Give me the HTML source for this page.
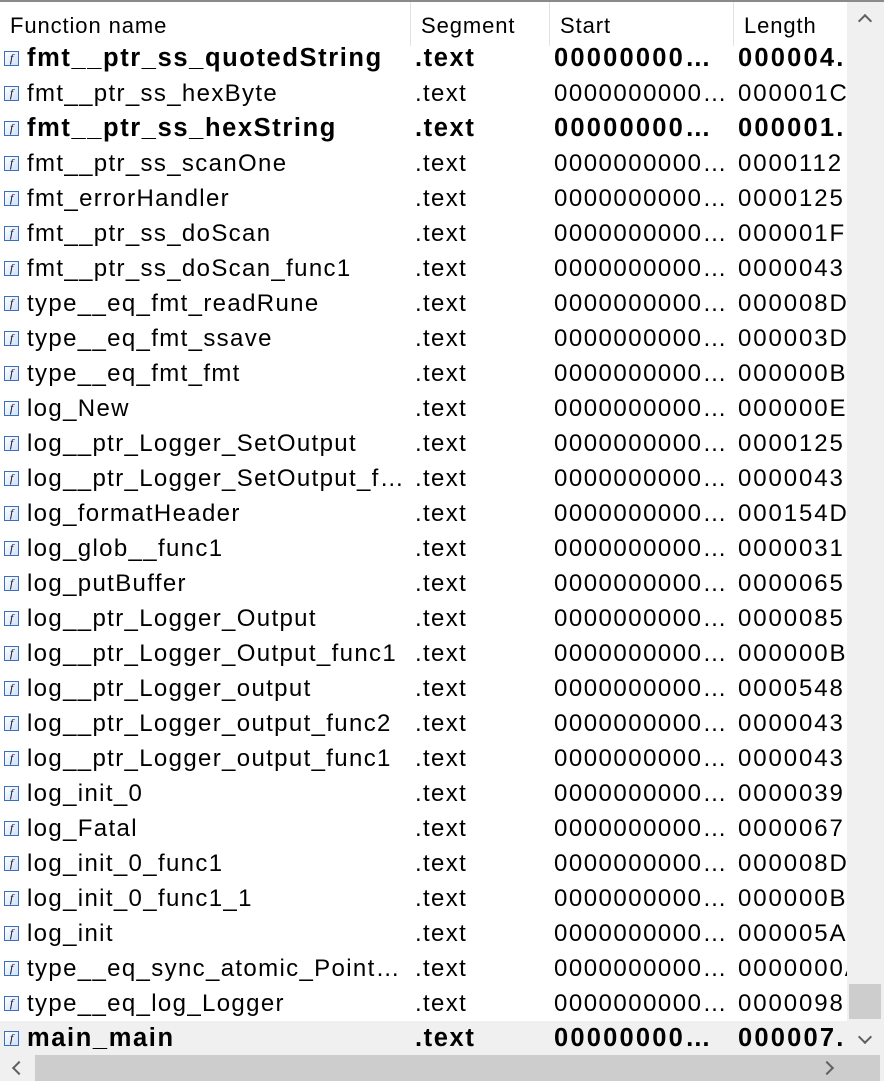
<!DOCTYPE html>
<html><head><meta charset="utf-8"><style>
*{margin:0;padding:0;box-sizing:border-box}
body{width:884px;height:1081px;overflow:hidden;background:#fff;font-family:"Liberation Sans",sans-serif;position:relative}
.top{position:absolute;left:0;top:0;width:884px;height:2px;background:#8a8a8a}
.hdr{position:absolute;top:2px;left:0;width:847px;height:44px;background:#fff}
.hdr div{position:absolute;top:0;height:44px;line-height:48px;font-size:22px;letter-spacing:0.9px;color:#000;padding-left:10px;border-right:1px solid #e3e3e3}
.list{position:absolute;top:46px;left:0;width:847px;height:1009px;overflow:hidden}
.row{position:absolute;left:0;width:847px;height:35px;font-size:24px;letter-spacing:1.35px;line-height:35px;white-space:nowrap}
.row span{position:absolute;top:0;overflow:hidden}
.c1{left:27px;width:382px;text-overflow:ellipsis}
.c2{left:415px;width:130px}
.c3{left:554px;width:176px;text-overflow:ellipsis;letter-spacing:1.5px}
.c4{left:738px;width:109px;text-overflow:clip;letter-spacing:1.9px}
.b{font-weight:bold;font-size:25.5px;letter-spacing:1.6px}
.b .c3,.b .c4{letter-spacing:2.2px}
.b .c3{width:165px}
.sel{background:#f0f0f0}
.ic{position:absolute;left:4px;top:10px;width:15px;height:15px;border:1px solid #3a6fc0;background:linear-gradient(135deg,#fff,#cfe0f8);font:italic 12px/13px "Liberation Serif",serif;text-align:center;color:#113;letter-spacing:0}
.vs{position:absolute;left:847px;top:2px;width:37px;height:1053px;background:#f0f0f0}
.vthumb{position:absolute;left:849px;top:984px;width:32px;height:35px;background:#cdcdcd}
.hs{position:absolute;left:0;top:1055px;width:884px;height:26px;background:#f0f0f0}
.hthumb{position:absolute;left:35px;top:1055px;width:845px;height:26px;background:#cdcdcd}
.arr{position:absolute;width:12px;height:12px;border-left:2.5px solid #606060;border-top:2.5px solid #606060}
</style></head><body>
<div class="top"></div>
<div class="list" id="l"></div>
<div class="hdr">
<div style="left:0;width:411px">Function name</div>
<div style="left:411px;width:139px">Segment</div>
<div style="left:550px;width:184px">Start</div>
<div style="left:734px;width:113px;border-right:none">Length</div>
</div>
<div class="vs"></div>
<div class="vthumb"></div>
<div class="arr" style="left:860px;top:16px;transform:rotate(45deg);width:10px;height:10px"></div>
<div class="arr" style="left:860px;top:1032px;transform:rotate(225deg);width:10px;height:10px"></div>
<div class="hs"></div>
<div class="hthumb"></div>
<div class="arr" style="left:14px;top:1063px;transform:rotate(-45deg);width:10px;height:10px"></div>
<div class="arr" style="left:822px;top:1063px;transform:rotate(135deg);width:10px;height:10px"></div>
<script>
var d=[["fmt__ptr_ss_quotedString",1,"000004."],["fmt__ptr_ss_hexByte",0,"000001C"],["fmt__ptr_ss_hexString",1,"000001."],["fmt__ptr_ss_scanOne",0,"0000112"],["fmt_errorHandler",0,"0000125"],["fmt__ptr_ss_doScan",0,"000001F3"],["fmt__ptr_ss_doScan_func1",0,"0000043"],["type__eq_fmt_readRune",0,"000008D"],["type__eq_fmt_ssave",0,"000003D"],["type__eq_fmt_fmt",0,"000000B4"],["log_New",0,"000000E0"],["log__ptr_Logger_SetOutput",0,"0000125"],["log__ptr_Logger_SetOutput_func1",0,"0000043"],["log_formatHeader",0,"000154D"],["log_glob__func1",0,"0000031"],["log_putBuffer",0,"0000065"],["log__ptr_Logger_Output",0,"0000085"],["log__ptr_Logger_Output_func1",0,"000000B9"],["log__ptr_Logger_output",0,"0000548"],["log__ptr_Logger_output_func2",0,"0000043"],["log__ptr_Logger_output_func1",0,"0000043"],["log_init_0",0,"0000039"],["log_Fatal",0,"0000067"],["log_init_0_func1",0,"000008D"],["log_init_0_func1_1",0,"000000B9"],["log_init",0,"000005A"],["type__eq_sync_atomic_Pointer_log_Logger",0,"0000000A"],["type__eq_log_Logger",0,"0000098"],["main_main",1,"000007."]];
var h="";d.forEach(function(r,i){h+='<div class="row'+(r[1]?' b':'')+(i==28?' sel':'')+'" style="top:'+(i*35-5)+'px"><div class="ic">f</div><span class="c1">'+r[0]+'</span><span class="c2">.text</span><span class="c3">'+(r[1]?'00000000000000':'00000000000000000')+'</span><span class="c4">'+r[2]+'</span></div>'});
document.getElementById("l").innerHTML=h;
</script>
</body></html>
